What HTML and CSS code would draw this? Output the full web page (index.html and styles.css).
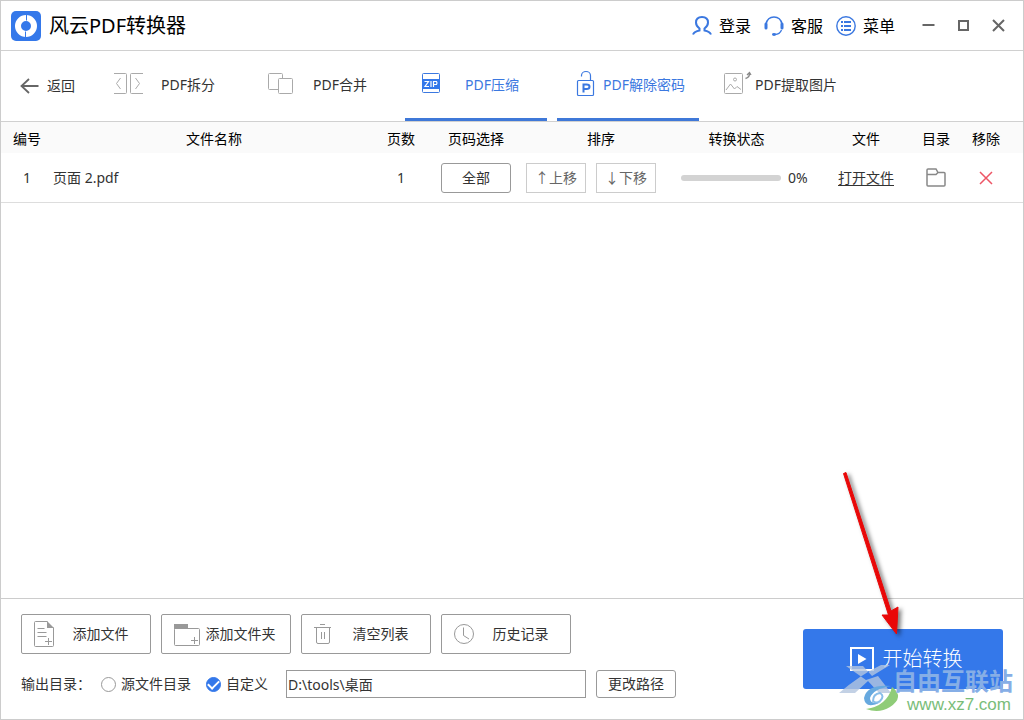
FILE: index.html
```html
<!DOCTYPE html>
<html lang="zh-CN">
<head>
<meta charset="utf-8">
<title>风云PDF转换器</title>
<link rel="stylesheet" href="styles.css">
</head>
<body>
<div class="window">
  <header class="titlebar">
    <svg class="logo" width="30" height="30" viewBox="0 0 30 30" fill="none">
      <rect width="30" height="30" rx="5" fill="#3478ea"/>
      <circle cx="15" cy="15" r="8" stroke="#fff" stroke-width="6"/>
      <path d="M15.500 3.500v6M14.500 20.500v6" stroke="#3478ea" stroke-width="1"/>
    </svg>
    <h1 class="title">风云PDF转换器</h1>
    <nav class="links">
      <button class="link" type="button">
        <svg width="20" height="20" viewBox="0 0 20 20" fill="none" stroke="#3b78e0" stroke-width="2">
          <path d="M1 18.500C2 16 4.500 15 7.500 14.500V12.500C5.500 11 4 9 4 6.500C4 3 6.500 1 10 1S16 3 16 6.500C16 9 14.500 11 12.500 12.500V14.500C15.500 15 18 16 19 18.500"/>
        </svg>
        <span>登录</span>
      </button>
      <button class="link" type="button">
        <svg width="20" height="20" viewBox="0 0 20 20" fill="none" stroke="#3b78e0">
          <path d="M2 8C3 3.500 6 1 10 1S17 3.500 18 8" stroke-width="1.500"/>
          <path d="M2 8v4M18 8v4" stroke-width="3" stroke-linecap="round"/>
          <path d="M17.500 14C16.500 16.500 14.500 18.500 11 18.500" stroke-width="1.300"/>
          <ellipse cx="10" cy="18.500" rx="2" ry="1.400" fill="#3b78e0" stroke="none"/>
        </svg>
        <span>客服</span>
      </button>
      <button class="link" type="button">
        <svg width="20" height="20" viewBox="0 0 20 20" fill="none" stroke="#3b78e0" stroke-width="1.400">
          <circle cx="10" cy="10" r="9.200"/>
          <path d="M5 6h2M8 6h7M5 10h2M8 10h7M5 14h2M8 14h7" stroke-width="1.800"/>
        </svg>
        <span>菜单</span>
      </button>
    </nav>
    <div class="controls">
      <button class="control" type="button" aria-label="最小化"><svg width="13" height="13" viewBox="0 0 13 13"><path d="M0.500 6h12" stroke="#666" stroke-width="2"/></svg></button>
      <button class="control" type="button" aria-label="最大化"><svg width="13" height="13" viewBox="0 0 13 13"><path d="M2 2h9v9h-9z" fill="none" stroke="#666" stroke-width="2"/></svg></button>
      <button class="control" type="button" aria-label="关闭"><svg width="13" height="13" viewBox="0 0 13 13"><path d="M1 1l11 11M12 1L1 12" stroke="#666" stroke-width="2"/></svg></button>
    </div>
  </header>

  <nav class="toolbar">
    <button class="back" type="button">
      <svg width="19" height="16" viewBox="0 0 19 16" fill="none" stroke="#666" stroke-width="1.800"><path d="M1.500 8H18.500M9 1L1.500 8L9 15"/></svg>
      <span>返回</span>
    </button>
    <div class="tabs">
      <button class="tab" type="button">
        <svg width="32" height="32" viewBox="0 0 32 32" fill="none" stroke="#aaa">
          <path d="M1 6.500h11.500q1 0 1 1v18q0 1-1 1H1M30 6.500H18.500q-1 0-1 1v18q0 1 1 1H30"/>
          <path d="M7.500 11L3.500 16.500L7.500 22M22.500 11L26.500 16.500L22.500 22"/>
        </svg>
        <span>PDF拆分</span>
      </button>
      <button class="tab" type="button">
        <svg width="32" height="32" viewBox="0 0 32 32" fill="none" stroke="#aaa">
          <path d="M13 22.500H4.500q-1 0-1-1V7.500q0-1 1-1h12q1 0 1 1v4"/>
          <rect x="13.500" y="11.500" width="14" height="15" rx="1"/>
        </svg>
        <span>PDF合并</span>
      </button>
      <button class="tab active" type="button">
        <svg width="32" height="32" viewBox="0 0 32 32" fill="none" stroke="#3b78e0">
          <rect x="5.500" y="6.500" width="17" height="19" rx="1"/>
          <path d="M5 12h18v10H5z" fill="#3478ea" stroke="none"/>
          <path d="M7.500 14.500h4L8 19.500h4M14 14v6M16.500 20v-5.500h3q1 1.500 0 3h-3" stroke="#fff" stroke-width="1.200"/>
        </svg>
        <span>PDF压缩</span>
      </button>
      <button class="tab active" type="button">
        <svg width="32" height="32" viewBox="0 0 32 32" fill="none" stroke="#3b78e0">
          <rect x="8.500" y="13.500" width="16" height="15" rx="1" stroke-width="1.200"/>
          <path d="M12.500 9.500V8.500a4.500 4 0 0 1 9 0V13" stroke-width="1.200"/>
          <path d="M14.500 25.500V17.500h3q3 0 3 2.300t-3 2.300h-3" stroke-width="2"/>
        </svg>
        <span>PDF解除密码</span>
      </button>
      <button class="tab" type="button">
        <svg width="32" height="32" viewBox="0 0 32 32" fill="none" stroke="#aaa">
          <rect x="3.500" y="6.500" width="18" height="20" rx="1"/>
          <circle cx="14" cy="12.500" r="1.500"/>
          <path d="M5 23l4.500-6l4 5l2.500-2.500l4 3"/>
          <path d="M24.500 11.500q4-1 4-5M26 8l2.500-2.500L30 8" stroke="#888" stroke-width="1.300"/>
        </svg>
        <span>PDF提取图片</span>
      </button>
    </div>
  </nav>

  <main class="content">
    <table class="files">
      <colgroup><col class="c-no"><col><col class="c-pages"><col class="c-range"><col class="c-sort"><col class="c-state"><col class="c-file"><col class="c-dir"><col class="c-remove"></colgroup>
      <thead>
        <tr><th>编号</th><th>文件名称</th><th>页数</th><th>页码选择</th><th>排序</th><th class="state-head">转换状态</th><th>文件</th><th>目录</th><th class="last">移除</th></tr>
      </thead>
      <tbody>
        <tr>
          <td>1</td>
          <td class="name">页面 2.pdf</td>
          <td>1</td>
          <td><button class="small range" type="button">全部</button></td>
          <td><div class="sort"><button class="small move" type="button">↑上移</button><button class="small move" type="button">↓下移</button></div></td>
          <td><div class="state"><span class="track" role="progressbar" aria-valuenow="0" aria-valuemin="0" aria-valuemax="100" aria-label="转换状态"></span><span>0%</span></div></td>
          <td><a class="open" href="#">打开文件</a></td>
          <td><button class="plain" type="button" aria-label="目录"><svg width="20" height="20" viewBox="0 0 20 20" fill="none" stroke="#888" stroke-width="1.500"><path d="M1 17V2q0-1 1-1h8l2 3.500h6q1 0 1 1V17q0 1-1 1H2q-1 0-1-1zM1 6.500h9l2-2"/></svg></button></td>
          <td class="last"><button class="plain" type="button" aria-label="移除"><svg width="14" height="14" viewBox="0 0 14 14" stroke="#ed5565" stroke-width="1.500"><path d="M1 1l12 12M13 1L1 13"/></svg></button></td>
        </tr>
      </tbody>
    </table>
  </main>

  <footer class="footer">
    <div class="options">
      <div class="actions">
        <button class="action" type="button">
          <svg width="28" height="28" viewBox="0 0 28 28" fill="none" stroke="#999">
            <path d="M14.500 1.500H2.500q-1 0-1 1v23q0 1 1 1h17q1 0 1-1V7.500"/>
            <path d="M14 1l7 7h-7z" fill="#999" stroke="none"/>
            <path d="M4.500 8.500h7M4.500 12.500h9M4.500 16.500h9M12 21.500h7M15.500 18v7"/>
          </svg>
          <span>添加文件</span>
        </button>
        <button class="action" type="button">
          <svg width="28" height="28" viewBox="0 0 28 28" fill="none" stroke="#999">
            <path d="M1 4h14v5H1z" fill="#999" stroke="none"/>
            <rect x="1.500" y="8.500" width="25" height="17" rx="1"/>
            <path d="M18 20.500h7M21.500 17v7"/>
          </svg>
          <span>添加文件夹</span>
        </button>
        <button class="action" type="button">
          <svg width="28" height="28" viewBox="0 0 28 28" fill="none" stroke="#999">
            <path d="M1 7.500h17M7 4.500h5M3.500 8v14q0 1.500 1.500 1.500h10q1.500 0 1.500-1.500V8M8.500 12v7M11.500 12v7"/>
          </svg>
          <span>清空列表</span>
        </button>
        <button class="action" type="button">
          <svg width="28" height="28" viewBox="0 0 28 28" fill="none" stroke="#999">
            <circle cx="11" cy="14" r="9.500"/><path d="M10.500 7.500V15.500L16 19"/>
          </svg>
          <span>历史记录</span>
        </button>
      </div>
      <div class="output">
        <span class="output-label">输出目录：</span>
        <label class="choice"><input type="radio" name="output">源文件目录</label>
        <label class="choice"><input type="radio" name="output" checked>自定义</label>
        <input class="path" type="text" value="D:\tools\桌面" aria-label="输出目录">
        <button class="small change" type="button">更改路径</button>
      </div>
    </div>
    <button class="start" type="button">
      <svg width="24" height="24" viewBox="0 0 24 24" fill="none"><rect x="1" y="1" width="22" height="22" stroke="#fff" stroke-width="2"/><path d="M8 7l8.500 5L8 17z" fill="#fff"/></svg>
      <span>开始转换</span>
    </button>
  </footer>

  <svg class="pointer" width="80" height="174" viewBox="0 0 80 174">
    <path d="M12.500 9.500L15 8.500L60 147L67 143L65.500 170L51 151L57.500 151Z" fill="#e90808" stroke="#e90808" stroke-linejoin="round"/>
  </svg>
  <div class="watermark">
    <svg width="174" height="52" viewBox="0 0 174 52" fill="none">
      <path d="M7 3h17l9 10L51 2H42Q21 12 0 30h16l13-12l11 12h12L39 13L27 17z" fill="#b4c5df" opacity=".8"/>
      <path d="M52 23Q28 21 25 35Q26 47 42 39Q31 42 31 35Q34 26 52 23z" fill="#67a9df"/>
      <path d="M27 46Q48 43 53 24Q66 34 51 44Q40 51 27 46z" fill="#8fcc78"/>
      <path d="M34 38q0-7 7-8q5 3 0 8q-4 3-7 0z" fill="#fff" stroke="#88bde9" stroke-width="2"/>
    </svg>
    <span class="mark-name">自由互联站</span>
    <span class="mark-url">www.xz7.com</span>
  </div>
</div>
</body>
</html>
```
FILE: styles.css
```css
* { box-sizing: border-box; }
body {
  margin: 0;
  background: #fff;
  color: #333;
  font: 14px/20px "Noto Sans", "Noto Sans CJK SC", sans-serif;
}
button {
  margin: 0;
  padding: 0;
  border: 0;
  background: none;
  color: inherit;
  font: inherit;
  white-space: nowrap;
}
svg { display: block; flex: none; }
.window {
  position: relative;
  display: flex;
  flex-direction: column;
  min-height: 100vh;
  border: 1px solid #ccc;
}
.titlebar {
  display: flex;
  align-items: center;
  height: 50px;
  padding: 0 7px 0 10px;
  border-bottom: 1px solid #d0d0d0;
  color: #000;
}
.title {
  margin: 0 auto 0 8px;
  font-size: 20px;
  line-height: 28px;
  font-weight: 400;
}
.links { display: flex; gap: 13px; margin-right: 16px; }
.link {
  display: flex;
  align-items: center;
  gap: 7px;
  font-size: 16px;
  line-height: 24px;
}
.controls { display: flex; align-items: center; }
.control {
  display: flex;
  justify-content: center;
  width: 35px;
}
.toolbar {
  display: flex;
  height: 71px;
  padding-left: 19px;
  border-bottom: 1px solid #d0d0d0;
}
.back {
  display: flex;
  align-items: center;
  gap: 8px;
  width: 81px;
}
.tabs { display: flex; gap: 10px; }
.tab {
  display: flex;
  align-items: center;
  width: 142px;
  padding: 0 12px 3px;
  border-bottom: 3px solid transparent;
}
.tab span { flex: 1; padding-top: 4px; text-align: center; }
.active { border-bottom-color: #3f78d8; color: #3b78e0; }
.content { flex: 1; }
.files {
  width: 100%;
  table-layout: fixed;
  border-collapse: collapse;
}
.c-no, .c-pages { width: 52px; }
.c-range { width: 98px; }
.c-sort { width: 152px; }
.c-state { width: 139px; }
.c-file { width: 100px; }
.c-dir { width: 40px; }
.c-remove { width: 67px; }
th {
  height: 31px;
  padding: 2px 0 0;
  background: #fafafa;
  color: #000;
  font-weight: 400;
  white-space: nowrap;
}
td {
  height: 49px;
  padding: 2px 0 0;
  border-bottom: 1px solid #ddd;
  text-align: center;
}
.state-head { padding-right: 20px; }
.last { padding-right: 7px; }
.name { text-align: left; }
.small {
  height: 30px;
  border: 1px solid #999;
  border-radius: 3px;
}
.range { width: 70px; }
.sort { display: flex; gap: 10px; padding-left: 1px; }
.move { width: 60px; border-color: #ccc; border-radius: 0; color: #666; }
.state { display: flex; align-items: center; gap: 7px; padding-left: 4px; }
.track { width: 100px; height: 6px; border-radius: 3px; background: #d3d3d3; }
.open { color: inherit; text-underline-offset: 2px; }
.plain { display: block; margin: 0 auto; }
.footer {
  display: flex;
  justify-content: space-between;
  align-items: center;
  padding: 15px 20px 21px;
  border-top: 1px solid #ccc;
}
.actions { display: flex; gap: 10px; }
.action {
  display: flex;
  align-items: center;
  width: 130px;
  height: 40px;
  padding: 0 10px 0 11px;
  border: 1px solid #999;
  border-radius: 2px;
}
.action span { flex: 1; text-align: center; }
.output { display: flex; align-items: center; margin-top: 16px; }
.output-label { width: 80px; }
.choice { display: flex; align-items: center; gap: 5px; margin-right: 15px; }
.choice input {
  appearance: none;
  display: grid;
  place-items: center;
  width: 15px;
  height: 15px;
  margin: 0;
  border: 1px solid #999;
  border-radius: 50%;
}
.choice input:checked { border-color: #3478ea; background: #3478ea; }
.choice input:checked::after {
  content: "";
  width: 9px;
  height: 5px;
  margin-bottom: 2px;
  border: solid #fff;
  border-width: 0 0 2px 2px;
  transform: rotate(-45deg);
}
.path {
  width: 300px;
  height: 28px;
  margin: 0 0 0 3px;
  padding: 0 1px;
  border: 1px solid #999;
  background: #fff;
  color: #333;
  font: inherit;
}
.change { width: 80px; height: 28px; margin-left: 10px; }
.start {
  display: flex;
  justify-content: center;
  align-items: center;
  gap: 9px;
  width: 200px;
  height: 60px;
  margin-top: 6px;
  padding-left: 6px;
  border-radius: 3px;
  background: #3478ea;
  color: #fff;
  font: 300 20px/20px "Liberation Sans", "Noto Sans CJK SC", sans-serif;
}
.pointer {
  position: absolute;
  right: 112px;
  bottom: 81px;
  filter: drop-shadow(3px 2px 2px rgba(0, 0, 0, .5));
  pointer-events: none;
}
.watermark {
  position: absolute;
  right: 10px;
  bottom: 4px;
  pointer-events: none;
}
.mark-name, .mark-url { position: absolute; white-space: nowrap; }
.mark-name {
  top: 7px;
  right: 0;
  color: #86aee6;
  font: 700 24px/24px "Liberation Sans", "Noto Sans CJK SC", sans-serif;
}
.mark-url {
  right: 2px;
  bottom: 0;
  color: #79bd79;
  font: 17px/20px "Liberation Sans", sans-serif;
}
```
